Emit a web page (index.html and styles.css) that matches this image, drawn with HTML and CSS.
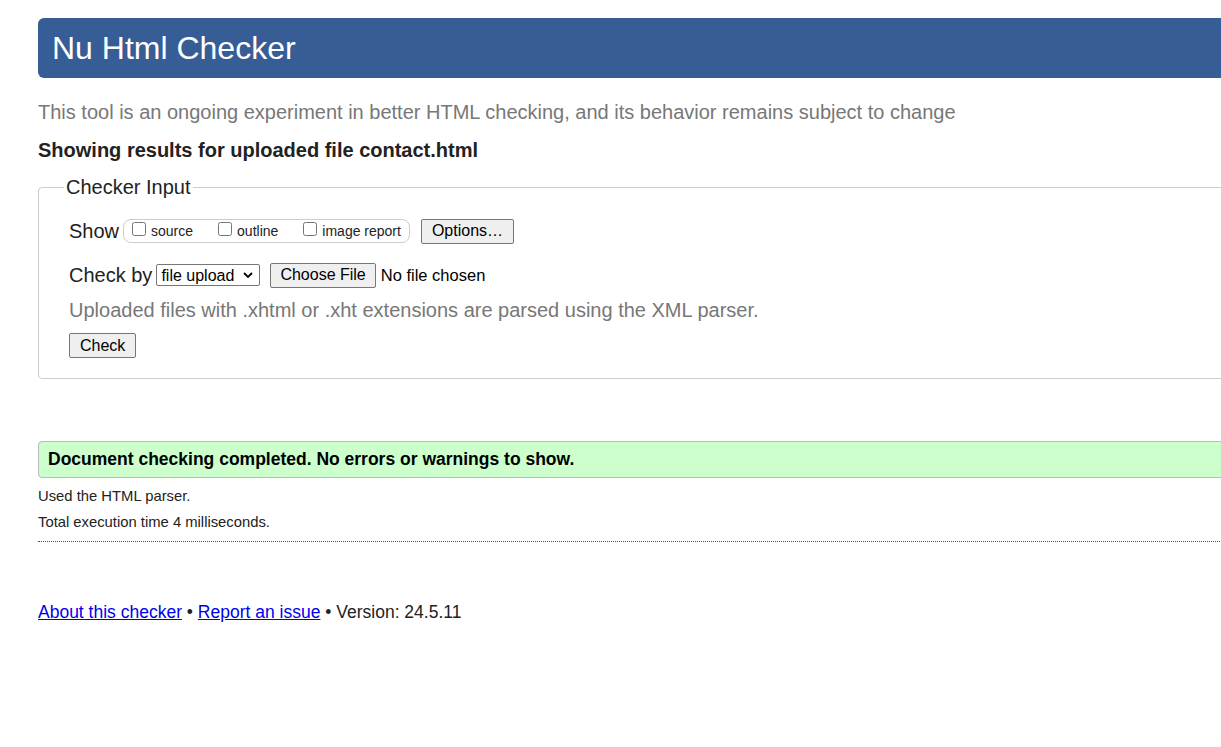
FILE: index.html
```html
<!DOCTYPE html>
<html>
<head>
<meta charset="utf-8">
<title>Nu Html Checker</title>
<link rel="stylesheet" href="styles.css">
</head>
<body>
<div class="page">
  <h1 class="title">Nu Html Checker</h1>
  <p class="intro">This tool is an ongoing experiment in better HTML checking, and its behavior remains subject to change</p>
  <p class="showing">Showing results for uploaded file contact.html</p>
  <fieldset class="input">
    <legend>Checker Input</legend>
    <div class="row">
      <span class="lbl">Show</span>
      <span class="checks">
        <label><input type="checkbox"> source</label>
        <label><input type="checkbox"> outline</label>
        <label><input type="checkbox"> image report</label>
      </span>
      <button class="btn opts">Options…</button>
    </div>
    <div class="row">
      <span class="lbl">Check by</span>
      <select class="sel"><option>file upload</option></select>
      <span class="file"><button class="btn">Choose File</button><span class="nofile">No file chosen</span></span>
    </div>
    <p class="hint">Uploaded files with .xhtml or .xht extensions are parsed using the XML parser.</p>
    <button class="btn check">Check</button>
  </fieldset>
  <p class="success">Document checking completed. No errors or warnings to show.</p>
  <p class="det">Used the HTML parser.</p>
  <p class="det">Total execution time 4 milliseconds.</p>
  <hr class="dots">
  <p class="footer"><a href="#">About this checker</a> • <a href="#">Report an issue</a> • Version: 24.5.11</p>
</div>
</body>
</html>
```
FILE: styles.css
```css
html, body { overflow: hidden; }
body {
  margin: 0;
  font-family: "Liberation Sans", Arial, sans-serif;
  color: #222;
  background: #fff;
}
.page {
  width: 1260px;
  padding: 18px 0 0 38px;
}
.title {
  margin: 0;
  height: 60px;
  box-sizing: border-box;
  background: #365d95;
  color: #fff;
  font-weight: normal;
  font-size: 32px;
  line-height: 60px;
  padding-left: 14px;
  border-radius: 6px;
}
.intro {
  margin: 20px 0 0;
  font-size: 20px;
  line-height: 28px;
  color: #777;
}
.showing {
  margin: 10px 0 0;
  font-size: 20px;
  font-weight: bold;
  line-height: 28px;
}
.input {
  margin: 12px 0 0;
  border: 1px solid #ccc;
  border-radius: 4px;
  padding: 19px 30px 20px;
}
.input legend {
  font-size: 20px;
  padding: 0 2px;
  margin-left: -5px;
  color: #222;
}
.row {
  display: flex;
  align-items: center;
  height: 26px;
}
.row + .row { margin-top: 18px; }
.lbl { font-size: 20px; margin-right: 4px; }
.checks {
  display: flex;
  gap: 24px;
  border: 1px solid #ccc;
  border-radius: 8px;
  height: 22px;
  align-items: center;
  padding: 0 8px 0 7px;
  font-size: 14px;
}
.checks label { display: flex; align-items: center; }
.checks input { margin: 0 5px 5px 1px; width: 14px; height: 14px; }
.btn {
  font-family: "Liberation Sans", Arial, sans-serif;
  font-size: 16px;
  color: #000;
  background: #efefef;
  border: 1px solid #767676;
  border-radius: 2px;
  height: 25px;
  padding: 0 10px;
}
.opts { margin-left: 11px; }
.sel {
  appearance: none;
  -webkit-appearance: none;
  font-family: "Liberation Sans", Arial, sans-serif;
  font-size: 16px;
  height: 22px;
  width: 104px;
  border: 1px solid #767676;
  border-radius: 2px;
  margin-left: 0;
  padding: 0 0 0 4px;
  color: #000;
  background: #fff url("data:image/svg+xml;utf8,<svg xmlns='http://www.w3.org/2000/svg' width='10' height='6' viewBox='0 0 10 6'><path d='M1 1l4 4 4-4' fill='none' stroke='black' stroke-width='1.8'/></svg>") no-repeat right 6px center;
}
.file { display: flex; align-items: center; margin-left: 10px; }
.file .btn { height: 25px; padding: 0 9px; }
.nofile { font-size: 16.5px; margin-left: 5px; color: #000; }
.hint {
  margin: 8px 0 0;
  font-size: 20px;
  line-height: 28px;
  color: #777;
}
.check { margin-top: 9px; }
.success {
  margin: 62px 0 0;
  background: #ccffcc;
  border: 1px solid #bbb;
  border-radius: 4px;
  font-size: 17.5px;
  font-weight: bold;
  color: #000;
  padding: 0 9px;
  height: 37px;
  line-height: 35px;
  box-sizing: border-box;
}
.det {
  margin: 10px 0 0;
  font-size: 14.8px;
  line-height: 17px;
}
.det + .det { margin-top: 9px; }
.dots {
  margin: 10px 0 0;
  border: 0;
  border-top: 1px dotted #555;
  height: 0;
}
.footer {
  margin: 59px 0 0;
  font-size: 17.5px;
  line-height: 22px;
}
.footer a { color: #00e; }
```
